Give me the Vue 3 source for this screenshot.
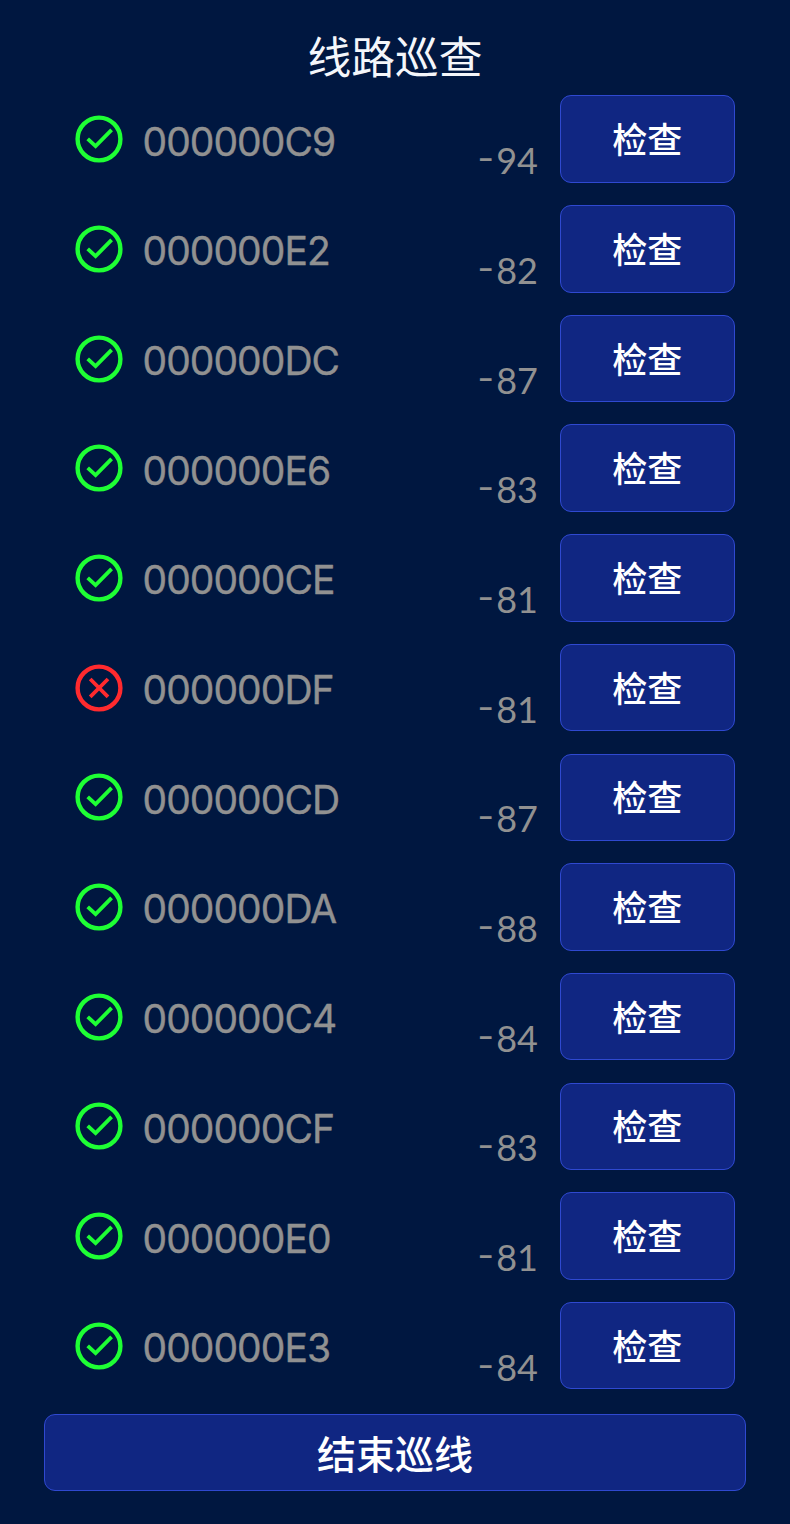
<script setup>
import { ref } from 'vue'

const devices = ref([
  { id: '000000C9', rssi: -94, ok: true },
  { id: '000000E2', rssi: -82, ok: true },
  { id: '000000DC', rssi: -87, ok: true },
  { id: '000000E6', rssi: -83, ok: true },
  { id: '000000CE', rssi: -81, ok: true },
  { id: '000000DF', rssi: -81, ok: false },
  { id: '000000CD', rssi: -87, ok: true },
  { id: '000000DA', rssi: -88, ok: true },
  { id: '000000C4', rssi: -84, ok: true },
  { id: '000000CF', rssi: -83, ok: true },
  { id: '000000E0', rssi: -81, ok: true },
  { id: '000000E3', rssi: -84, ok: true },
])
</script>

<template>
  <div class="page">
    <h1 class="title">线路巡查</h1>

    <ul class="list">
      <li v-for="d in devices" :key="d.id" class="row">
        <svg class="status" :class="{ bad: !d.ok }" viewBox="0 0 48 48">
          <circle cx="24" cy="24" r="21.4" />
          <path v-if="d.ok" d="M12.7 23.8 L20.6 31.2 L36.6 14.8" />
          <path v-else d="M15.2 15 L33 32.8 M33 15 L15.2 32.8" />
        </svg>
        <span class="id">{{ d.id }}</span>
        <span class="rssi"><span class="sign">-</span>{{ Math.abs(d.rssi) }}</span>
        <button class="btn check">检查</button>
      </li>
    </ul>

    <button class="btn finish">结束巡线</button>
  </div>
</template>

<style>
body {
  margin: 0;
  background: #001740;
}
</style>

<style scoped>
.page {
  box-sizing: border-box;
  height: 1524px;
  padding-top: 26px;
  background: #001740;
  font-family: Inter, 'Noto Sans CJK SC', sans-serif;
}
.title {
  margin: 0;
  height: 69.4px;
  line-height: 65px;
  text-align: center;
  font-size: 43.8px;
  font-weight: 400;
  color: #f4f6fa;
}
.list {
  display: flex;
  flex-direction: column;
  gap: 22.2px;
  margin: 0;
  padding: 0 55px 0 74.5px;
  list-style: none;
}
.row {
  display: flex;
  align-items: center;
  height: 87.5px;
}
.status {
  flex: none;
  width: 48px;
  height: 48px;
  fill: none;
  stroke: #1eff34;
  stroke-width: 4.4;
}
.status path {
  stroke-width: 3.8;
}
.status.bad {
  stroke: #ff2a2e;
}
.id {
  flex: 1;
  margin-left: 20px;
  padding-top: 5px;
  font-size: 39px;
  line-height: 48px;
  letter-spacing: -0.95px;
  color: #919191;
  -webkit-text-stroke: 0.4px #919191;
}
.rssi {
  margin-right: 21.5px;
  padding-top: 42px;
  font-family: Lato, sans-serif;
  font-size: 36px;
  line-height: 44px;
  color: #919191;
}
.sign {
  display: inline-block;
  margin-right: 3.5px;
  transform: translateY(-3px) scaleX(1.3);
}
.btn {
  box-sizing: border-box;
  display: flex;
  align-items: center;
  justify-content: center;
  padding: 0 0 3px;
  border: 1px solid #2f49d0;
  border-radius: 11px;
  background: #102682;
  color: #fff;
  font-family: inherit;
  font-weight: 500;
}
.check {
  width: 175.5px;
  height: 87.5px;
  font-size: 35px;
}
.finish {
  width: 702px;
  height: 77px;
  margin: 24.5px auto 0;
  padding-bottom: 1px;
  font-size: 39px;
}
</style>
